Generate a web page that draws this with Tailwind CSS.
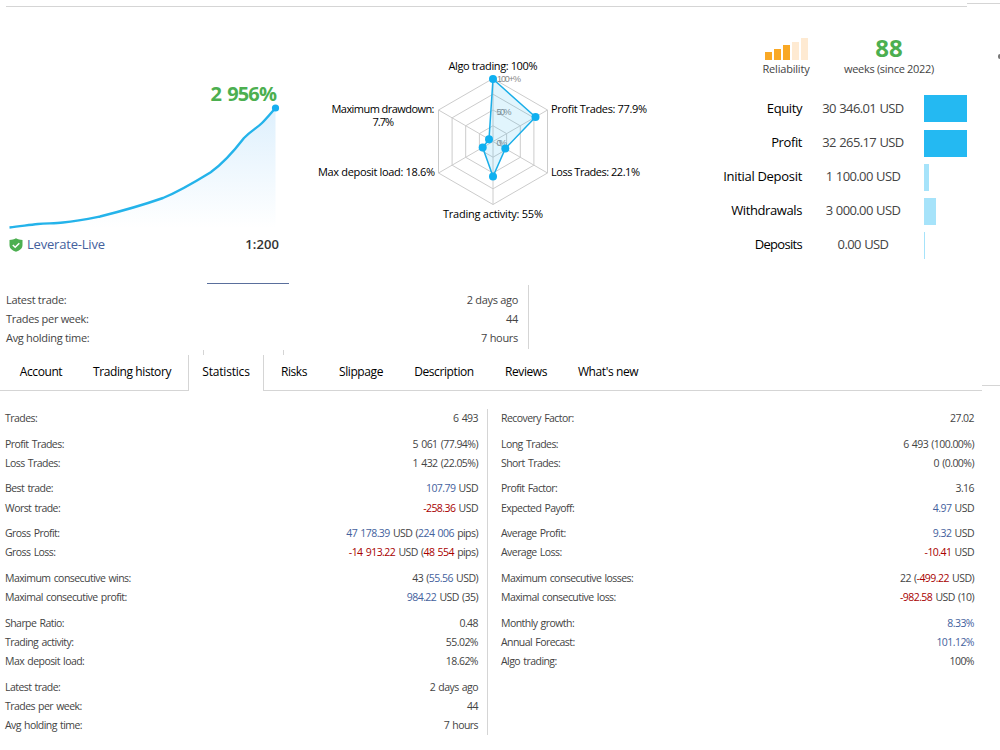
<!DOCTYPE html>
<html lang="en">
<head>
    <meta charset="UTF-8">
    <meta name="viewport" content="width=device-width, initial-scale=1.0">
    <title>Signal Statistics</title>
    <script src="https://cdn.jsdelivr.net/npm/@tailwindcss/browser@4"></script>
</head>
<body class="w-[1000px] h-[750px] overflow-hidden bg-white text-[#444] font-['Trebuchet_MS','Open_Sans',sans-serif]">
    <!-- Top rule -->
    <div class="flex h-[7px]">
        <div class="ml-[6px] w-[961px] border-b border-[#d5d5d5]"></div>
        <div class="h-[4px] w-[33px] border-b border-[#d5d5d5]"></div>
    </div>

    <!-- Summary -->
    <div class="flex h-[276px]">
        <!-- Growth -->
        <div class="w-[310px] pt-[74px]">
            <div class="h-[26px] w-[276px] text-right text-[20px] leading-[26px] font-bold tracking-[-0.9px] [word-spacing:2px] text-[#4caf50]">2 956%</div>
            <svg class="block" width="310" height="125" viewBox="0 107 310 125" overflow="visible">
                <defs>
                    <linearGradient id="area" x1="0" y1="0" x2="0" y2="1">
                        <stop offset="0" stop-color="#def0fd"/>
                        <stop offset="1" stop-color="#ffffff"/>
                    </linearGradient>
                </defs>
                <path fill="url(#area)" d="M9.500 227.500C20 226.500 28 225 38 224C47 223.300 55 223.300 63 222.500C78 221 90 218.500 100 216.500C124 210.500 143 205 163 198C182 190 198 180 211 172C225 162 234 151 244 138C252 130 257 128 262 123C267 118 271 113 275.500 108V228Z"/>
                <path fill="none" stroke="#24b3ea" stroke-width="2.400" d="M9.500 227.500C20 226.500 28 225 38 224C47 223.300 55 223.300 63 222.500C78 221 90 218.500 100 216.500C124 210.500 143 205 163 198C182 190 198 180 211 172C225 162 234 151 244 138C252 130 257 128 262 123C267 118 271 113 275.500 108"/>
                <circle cx="275.500" cy="108" r="3.600" fill="#16aef0"/>
            </svg>
            <div class="flex h-[25px] w-[279px] items-center pl-[9px]">
                <svg width="14" height="14" viewBox="0 0 14 14">
                    <path fill="#4caf50" d="M7 0.300C9 1.600 11 1.900 13.500 1.900V7C13.500 10.500 10.500 12.700 7 13.800C3.500 12.700 0.500 10.500 0.500 7V1.900C3 1.900 5 1.600 7 0.300Z"/>
                    <path fill="none" stroke="#fff" stroke-width="1.500" d="M3.800 7L6.200 9.300L10.300 5.200"/>
                </svg>
                <span class="ml-1 text-[13px] tracking-[-0.2px] text-[#44619d]">Leverate-Live</span>
                <span class="ml-auto text-[13px] font-semibold tracking-[0.1px] text-[#333]">1:200</span>
            </div>
        </div>

        <!-- Radar -->
        <svg class="block" width="360" height="230" viewBox="310 7 360 230" font-size="11" fill="#000">
            <g fill="none" stroke="#ccc" stroke-width="1">
                <path d="M493 78.500L547.500 110V173L493 204.500L438.500 173V110Z"/>
                <path d="M493 94.200L533.900 117.800V165.200L493 188.800L452.100 165.200V117.800Z"/>
                <path d="M493 110L520.300 125.800V157.300L493 173L465.700 157.300V125.800Z"/>
                <path d="M493 125.800L506.600 133.600V149.400L493 157.200L479.400 149.400V133.600Z"/>
                <path d="M493 78.500V204.500M438.500 110L547.500 173M547.500 110L438.500 173"/>
            </g>
            <g fill="#888" font-size="9" font-family="Liberation Sans, sans-serif">
                <text x="497" y="82" textLength="24">100+%</text>
                <text x="496.500" y="114.500" textLength="15">50%</text>
                <text x="496.500" y="145.500" textLength="10.500">0%</text>
            </g>
            <path fill="#16aef0" fill-opacity=".13" stroke="#1aaee8" stroke-width="1.500" d="M493 79L535.500 117L505.300 148.600L493 176.500L482.700 147.600L489 139.300Z"/>
            <g fill="#10b0f0">
                <circle cx="493" cy="79" r="4"/>
                <circle cx="535.500" cy="117" r="4"/>
                <circle cx="505.300" cy="148.600" r="4"/>
                <circle cx="493" cy="176.500" r="4"/>
                <circle cx="482.700" cy="147.600" r="4"/>
                <circle cx="489" cy="139.300" r="4"/>
            </g>
            <text x="448.500" y="70" textLength="89">Algo trading: 100%</text>
            <text x="551" y="113" textLength="96">Profit Trades: 77.9%</text>
            <text x="551" y="176" textLength="89">Loss Trades: 22.1%</text>
            <text x="443" y="218" textLength="100">Trading activity: 55%</text>
            <text x="318" y="176" textLength="117">Max deposit load: 18.6%</text>
            <text x="331.500" y="113" textLength="103">Maximum drawdown:</text>
            <text x="372.500" y="126" textLength="21.500">7.7%</text>
        </svg>

        <!-- Balance -->
        <div class="w-[330px] pt-[28px]">
            <div class="flex h-[57px]">
                <div class="ml-[76px] flex w-[80px] flex-col items-center">
                    <div class="mt-[3px] flex h-[22px] w-[43px] items-end gap-[2px]">
                        <div class="h-[8px] w-[7px] bg-[#f9a825]"></div>
                        <div class="h-[11px] w-[7px] bg-[#f9a825]"></div>
                        <div class="h-[15px] w-[7px] bg-[#f9a825]"></div>
                        <div class="h-[18px] w-[7px] bg-[#feead2]"></div>
                        <div class="h-[22px] w-[7px] bg-[#feead2]"></div>
                    </div>
                    <div class="text-[11px] leading-[18px] tracking-[-0.2px]">Reliability</div>
                </div>
                <div class="ml-[13px] w-[100px] text-center whitespace-nowrap">
                    <div class="h-[25px] text-[24px] leading-[26px] font-bold text-[#4caf50]">88</div>
                    <div class="text-[11px] leading-[18px] tracking-[-0.3px]">weeks (since 2022)</div>
                </div>
                <div class="mt-[19px] ml-[59px] h-[5px] w-[2px] rounded-l bg-[#777]"></div>
            </div>
            <div class="grid grid-cols-[132px_122px_43px] auto-rows-[34px] items-center text-[13px] tracking-[-0.4px] whitespace-nowrap">
                <span class="text-right text-black">Equity</span><span class="text-center tracking-[-0.6px] [word-spacing:0.5px]">30 346.01 USD</span><div class="mb-[2px] h-[27px] w-[43px] bg-[#24b9f2]"></div>
                <span class="text-right text-black">Profit</span><span class="text-center tracking-[-0.6px] [word-spacing:0.5px]">32 265.17 USD</span><div class="h-[27px] w-[43px] bg-[#24b9f2]"></div>
                <span class="text-right tracking-[-0.3px] text-black">Initial Deposit</span><span class="text-center tracking-[-0.6px] [word-spacing:0.5px]">1 100.00 USD</span><div class="h-[27px] w-[5px] bg-[#a6e3fa]"></div>
                <span class="text-right text-black">Withdrawals</span><span class="text-center tracking-[-0.6px] [word-spacing:0.5px]">3 000.00 USD</span><div class="h-[27px] w-[12px] bg-[#a6e3fa]"></div>
                <span class="text-right tracking-[-0.7px] text-black">Deposits</span><span class="text-center tracking-[-0.6px] [word-spacing:0.5px]">0.00 USD</span><div class="h-[27px] w-px bg-[#a6e3fa]"></div>
            </div>
        </div>
    </div>

    <!-- Latest activity -->
    <div class="ml-[207px] h-px w-[82px] bg-[#5a6f9c]"></div>
    <div class="mt-px h-[64px] w-[529px] border-r border-[#d5d5d5] pt-[5px] pr-[10px] pl-[6px] text-[11px] leading-[19px] tracking-[-0.3px]">
        <div class="flex justify-between"><span>Latest trade:</span><span>2 days ago</span></div>
        <div class="flex justify-between"><span>Trades per week:</span><span>44</span></div>
        <div class="flex justify-between"><span>Avg holding time:</span><span>7 hours</span></div>
    </div>
    <div class="mt-px ml-[203px] h-[5px] w-[81px] border-x border-[#d5d5d5]"></div>

    <!-- Tabs -->
    <div class="flex h-[36px] text-center text-[12px] leading-[33px] tracking-[-0.4px] whitespace-nowrap text-black">
        <div class="w-[6px] border-b border-[#d5d5d5]"></div>
        <div class="w-[70px] border-b border-[#d5d5d5]">Account</div>
        <div class="w-[112px] border-b border-[#d5d5d5]">Trading history</div>
        <div class="w-[76px] border-x border-[#d5d5d5] tracking-[-0.2px]">Statistics</div>
        <div class="w-[60px] border-b border-[#d5d5d5]">Risks</div>
        <div class="w-[74px] border-b border-[#d5d5d5]">Slippage</div>
        <div class="w-[92px] border-b border-[#d5d5d5]">Description</div>
        <div class="w-[72px] border-b border-[#d5d5d5]">Reviews</div>
        <div class="w-[92px] border-b border-[#d5d5d5]">What's new</div>
        <div class="w-[328px] border-b border-[#d5d5d5]"></div>
        <div class="h-[31px] w-[18px] border-b border-[#d5d5d5]"></div>
    </div>

    <!-- Statistics -->
    <div class="mt-[18px] flex text-[10.5px] leading-[19.2px] tracking-[-0.55px] [word-spacing:1px] whitespace-nowrap">
        <div class="flex h-[326px] w-[488px] flex-col gap-[6.4px] border-r border-[#d5d5d5] pr-[9px] pl-[5px]">
            <div>
                <div class="flex justify-between"><span>Trades:</span><span>6 493</span></div>
            </div>
            <div>
                <div class="flex justify-between"><span>Profit Trades:</span><span>5 061 (77.94%)</span></div>
                <div class="flex justify-between"><span>Loss Trades:</span><span>1 432 (22.05%)</span></div>
            </div>
            <div>
                <div class="flex justify-between"><span>Best trade:</span><span><span class="text-[#44619d]">107.79</span> USD</span></div>
                <div class="flex justify-between"><span>Worst trade:</span><span><span class="text-[#a80000]">-258.36</span> USD</span></div>
            </div>
            <div>
                <div class="flex justify-between"><span>Gross Profit:</span><span><span class="text-[#44619d]">47 178.39</span> USD (<span class="text-[#44619d]">224 006</span> pips)</span></div>
                <div class="flex justify-between"><span>Gross Loss:</span><span><span class="text-[#a80000]">-14 913.22</span> USD (<span class="text-[#a80000]">48 554</span> pips)</span></div>
            </div>
            <div>
                <div class="flex justify-between"><span>Maximum consecutive wins:</span><span>43 (<span class="text-[#44619d]">55.56</span> USD)</span></div>
                <div class="flex justify-between"><span>Maximal consecutive profit:</span><span><span class="text-[#44619d]">984.22</span> USD (35)</span></div>
            </div>
            <div>
                <div class="flex justify-between"><span>Sharpe Ratio:</span><span>0.48</span></div>
                <div class="flex justify-between"><span>Trading activity:</span><span>55.02%</span></div>
                <div class="flex justify-between"><span>Max deposit load:</span><span>18.62%</span></div>
            </div>
            <div>
                <div class="flex justify-between"><span>Latest trade:</span><span>2 days ago</span></div>
                <div class="flex justify-between"><span>Trades per week:</span><span>44</span></div>
                <div class="flex justify-between"><span>Avg holding time:</span><span>7 hours</span></div>
            </div>
        </div>
        <div class="flex w-[486px] flex-col gap-[6.4px] pl-[13px]">
            <div>
                <div class="flex justify-between"><span>Recovery Factor:</span><span>27.02</span></div>
            </div>
            <div>
                <div class="flex justify-between"><span>Long Trades:</span><span>6 493 (100.00%)</span></div>
                <div class="flex justify-between"><span>Short Trades:</span><span>0 (0.00%)</span></div>
            </div>
            <div>
                <div class="flex justify-between"><span>Profit Factor:</span><span>3.16</span></div>
                <div class="flex justify-between"><span>Expected Payoff:</span><span><span class="text-[#44619d]">4.97</span> USD</span></div>
            </div>
            <div>
                <div class="flex justify-between"><span>Average Profit:</span><span><span class="text-[#44619d]">9.32</span> USD</span></div>
                <div class="flex justify-between"><span>Average Loss:</span><span><span class="text-[#a80000]">-10.41</span> USD</span></div>
            </div>
            <div>
                <div class="flex justify-between"><span>Maximum consecutive losses:</span><span>22 (<span class="text-[#a80000]">-499.22</span> USD)</span></div>
                <div class="flex justify-between"><span>Maximal consecutive loss:</span><span><span class="text-[#a80000]">-982.58</span> USD (10)</span></div>
            </div>
            <div>
                <div class="flex justify-between"><span>Monthly growth:</span><span class="text-[#44619d]">8.33%</span></div>
                <div class="flex justify-between"><span>Annual Forecast:</span><span class="text-[#44619d]">101.12%</span></div>
                <div class="flex justify-between"><span>Algo trading:</span><span>100%</span></div>
            </div>
        </div>
    </div>
</body>
</html>
